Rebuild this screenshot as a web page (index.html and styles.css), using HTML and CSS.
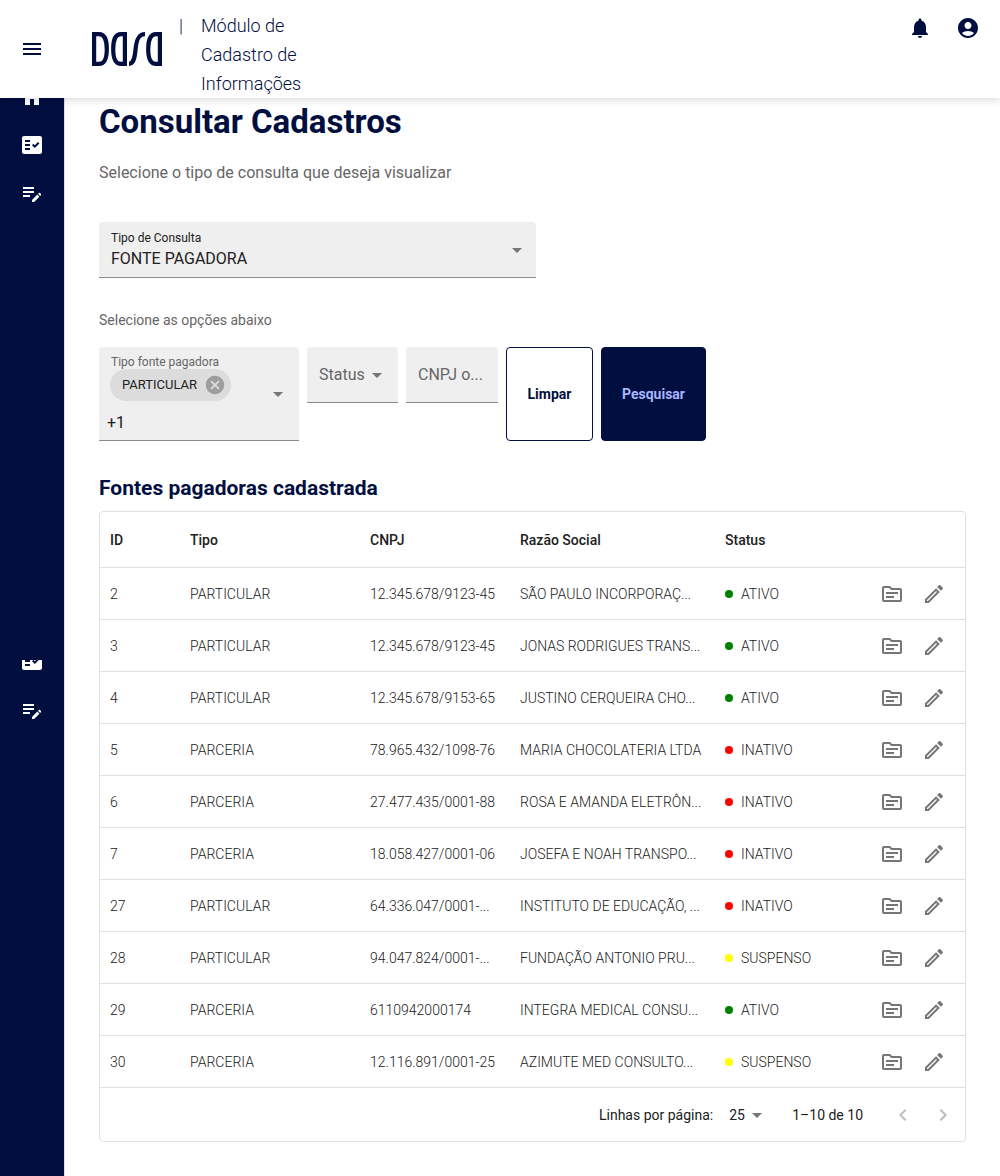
FILE: index.html
```html
<!DOCTYPE html>
<html lang="pt-BR">
<head>
<meta charset="utf-8">
<meta name="viewport" content="width=device-width, initial-scale=1">
<title>Consultar Cadastros</title>
<link rel="stylesheet" href="styles.css">
</head>
<body>
<svg class="sprite" aria-hidden="true">
  <symbol id="menu" viewBox="0 0 24 24"><path d="M3 18h18v-2H3v2zm0-5h18v-2H3v2zm0-7v2h18V6H3z"/></symbol>
  <symbol id="bell" viewBox="0 0 24 24"><path d="M12 22c1.1 0 2-.9 2-2h-4c0 1.100.89 2 2 2zm6-6v-5c0-3.070-1.640-5.640-4.500-6.320V4c0-.83-.67-1.500-1.500-1.500s-1.500.67-1.500 1.500v.68C7.630 5.360 6 7.920 6 11v5l-2 2v1h16v-1l-2-2z"/></symbol>
  <symbol id="account" viewBox="0 0 24 24"><path d="M12 2C6.480 2 2 6.480 2 12s4.480 10 10 10 10-4.480 10-10S17.520 2 12 2zm0 4c1.930 0 3.500 1.570 3.500 3.500S13.930 13 12 13s-3.500-1.570-3.500-3.500S10.070 6 12 6zm0 14c-2.030 0-4.430-.82-6.140-2.880C7.550 15.800 9.680 15 12 15s4.450.8 6.140 2.120C16.430 19.180 14.030 20 12 20z"/></symbol>
  <symbol id="home" viewBox="0 0 24 24"><path d="M10 20v-6h4v6h5v-8h3L12 3 2 12h3v8z"/></symbol>
  <symbol id="check" viewBox="0 0 24 24"><path fill-rule="evenodd" d="M20 3H4c-1.100 0-2 .9-2 2v14c0 1.100.9 2 2 2h16c1.100 0 2-.9 2-2V5c0-1.100-.9-2-2-2zM10 17H5v-2h5v2zm0-4H5v-2h5v2zm0-4H5V7h5v2zm4.820 6L12 12.160l1.410-1.410 1.410 1.420L17.990 9l1.420 1.420L14.820 15z"/></symbol>
  <symbol id="note" viewBox="0 0 24 24"><path d="M3 10h11v2H3v-2zm0-2h11V6H3v2zm0 8h7v-2H3v2zm15.010-3.130.71-.71c.39-.39 1.020-.39 1.410 0l.71.71c.39.39.39 1.020 0 1.410l-.71.71-2.120-2.120zm-.71.71-5.300 5.300V21h2.120l5.300-5.300-2.120-2.120z"/></symbol>
  <symbol id="source" viewBox="0 0 24 24"><path d="M20 6h-8l-2-2H4c-1.100 0-1.990.9-1.990 2L2 18c0 1.100.9 2 2 2h16c1.100 0 2-.9 2-2V8c0-1.100-.9-2-2-2zm0 12H4V6h5.170l2 2H20v10zm-2-6H6v-2h12v2zm-4 4H6v-2h8v2z"/></symbol>
  <symbol id="edit" viewBox="0 0 24 24"><path d="m14.060 9.020.92.92L5.920 19H5v-.92l9.060-9.060M17.660 3c-.25 0-.51.1-.7.29l-1.830 1.830 3.750 3.750 1.830-1.830c.39-.39.39-1.020 0-1.410l-2.340-2.340c-.2-.2-.45-.29-.71-.29zm-3.600 3.190L3 17.250V21h3.750L17.810 9.940l-3.750-3.750z"/></symbol>
  <symbol id="arrow" viewBox="0 0 24 24"><path d="m7 10 5 5 5-5z"/></symbol>
  <symbol id="cancel" viewBox="0 0 24 24"><path d="M12 2C6.470 2 2 6.470 2 12s4.470 10 10 10 10-4.470 10-10S17.530 2 12 2zm5 13.590L15.590 17 12 13.410 8.410 17 7 15.590 10.590 12 7 8.410 8.410 7 12 10.590 15.590 7 17 8.410 13.410 12 17 15.590z"/></symbol>
  <symbol id="prev" viewBox="0 0 24 24"><path d="M15.410 16.590 10.830 12l4.580-4.590L14 6l-6 6 6 6z"/></symbol>
  <symbol id="next" viewBox="0 0 24 24"><path d="M8.590 16.590 13.170 12 8.590 7.410 10 6l6 6-6 6z"/></symbol>
</svg>

<header class="topbar">
  <button class="icon-button menu-button" type="button" aria-label="Menu"><svg class="icon"><use href="#menu"/></svg></button>
  <svg class="logo" viewBox="0 0 70 36" role="img" aria-label="Dasa">
    <g fill="none" stroke="currentColor" stroke-width="4.200">
      <path d="M2.100 3.100H7c5.500 0 7.800 4.900 7.800 14.900S12.500 32.900 7 32.900H2.100z"/>
      <path d="M32.900 3.100H29c-5.500 0-7.800 4.900-7.800 14.900s2.300 14.900 7.800 14.900h3.900z"/>
      <path d="M37 32.900c4 0 5.600-4 6.600-14.900S47.500 3.100 53 3.100"/>
      <path d="M67.900 3.100H64c-5.500 0-7.800 4.900-7.800 14.900s2.300 14.900 7.800 14.900h3.900z"/>
    </g>
  </svg>
  <span class="divider">|</span>
  <p class="module">Módulo de Cadastro de Informações</p>
  <div class="topbar-actions">
    <button class="icon-button" type="button" aria-label="Notificações"><svg class="icon"><use href="#bell"/></svg></button>
    <button class="icon-button" type="button" aria-label="Conta"><svg class="icon"><use href="#account"/></svg></button>
  </div>
</header>

<div class="shell">
  <nav class="sidebar" aria-label="Principal">
    <div class="nav-group">
      <a class="nav-link nav-cut" href="#" aria-label="Início"><svg class="icon"><use href="#home"/></svg></a>
      <a class="nav-link" href="#" aria-label="Consultas"><svg class="icon"><use href="#check"/></svg></a>
      <a class="nav-link" href="#" aria-label="Cadastros"><svg class="icon"><use href="#note"/></svg></a>
    </div>
    <div class="nav-group">
      <a class="nav-link nav-cut" href="#" aria-label="Consultas"><svg class="icon"><use href="#check"/></svg></a>
      <a class="nav-link" href="#" aria-label="Cadastros"><svg class="icon"><use href="#note"/></svg></a>
    </div>
  </nav>

  <main class="content">
    <h1>Consultar Cadastros</h1>
    <p class="lead">Selecione o tipo de consulta que deseja visualizar</p>

    <div class="field query-field">
      <label for="tipo-consulta">Tipo de Consulta</label>
      <select id="tipo-consulta"><option>FONTE PAGADORA</option></select>
      <svg class="icon caret"><use href="#arrow"/></svg>
    </div>

    <p class="hint">Selecione as opções abaixo</p>
    <form class="filters">
      <div class="field multi-field" role="group" aria-labelledby="tipo-fonte">
        <span class="multi-label" id="tipo-fonte">Tipo fonte pagadora</span>
        <div class="chip">PARTICULAR<button type="button" class="chip-remove" aria-label="Remover PARTICULAR"><svg class="icon"><use href="#cancel"/></svg></button></div>
        <span class="more">+1</span>
        <button type="button" class="caret multi-open" aria-label="Abrir opções"><svg class="icon"><use href="#arrow"/></svg></button>
      </div>
      <div class="field short-field status-field">
        <select aria-label="Status"><option>Status</option></select>
        <svg class="icon caret"><use href="#arrow"/></svg>
      </div>
      <div class="field short-field">
        <input type="text" aria-label="CNPJ" placeholder="CNPJ o...">
      </div>
      <button class="button" type="reset">Limpar</button>
      <button class="button button-primary" type="submit">Pesquisar</button>
    </form>

    <h2>Fontes pagadoras cadastrada</h2>
    <section class="panel">
      <table>
        <colgroup><col class="col-id"><col class="col-type"><col class="col-cnpj"><col class="col-name"><col class="col-status"><col class="col-actions"></colgroup>
        <thead><tr><th>ID</th><th>Tipo</th><th>CNPJ</th><th>Razão Social</th><th>Status</th><th></th></tr></thead>
        <tbody>
          <tr><td>2</td><td>PARTICULAR</td><td>12.345.678/9123-45</td><td>SÃO PAULO INCORPORAÇ...</td><td><span class="status active">ATIVO</span></td><td><div class="actions"><button type="button" class="icon-button" aria-label="Detalhes"><svg class="icon"><use href="#source"/></svg></button><button type="button" class="icon-button" aria-label="Editar"><svg class="icon"><use href="#edit"/></svg></button></div></td></tr>
          <tr><td>3</td><td>PARTICULAR</td><td>12.345.678/9123-45</td><td>JONAS RODRIGUES TRANS...</td><td><span class="status active">ATIVO</span></td><td><div class="actions"><button type="button" class="icon-button" aria-label="Detalhes"><svg class="icon"><use href="#source"/></svg></button><button type="button" class="icon-button" aria-label="Editar"><svg class="icon"><use href="#edit"/></svg></button></div></td></tr>
          <tr><td>4</td><td>PARTICULAR</td><td>12.345.678/9153-65</td><td>JUSTINO CERQUEIRA CHO...</td><td><span class="status active">ATIVO</span></td><td><div class="actions"><button type="button" class="icon-button" aria-label="Detalhes"><svg class="icon"><use href="#source"/></svg></button><button type="button" class="icon-button" aria-label="Editar"><svg class="icon"><use href="#edit"/></svg></button></div></td></tr>
          <tr><td>5</td><td>PARCERIA</td><td>78.965.432/1098-76</td><td>MARIA CHOCOLATERIA LTDA</td><td><span class="status inactive">INATIVO</span></td><td><div class="actions"><button type="button" class="icon-button" aria-label="Detalhes"><svg class="icon"><use href="#source"/></svg></button><button type="button" class="icon-button" aria-label="Editar"><svg class="icon"><use href="#edit"/></svg></button></div></td></tr>
          <tr><td>6</td><td>PARCERIA</td><td>27.477.435/0001-88</td><td>ROSA E AMANDA ELETRÔN...</td><td><span class="status inactive">INATIVO</span></td><td><div class="actions"><button type="button" class="icon-button" aria-label="Detalhes"><svg class="icon"><use href="#source"/></svg></button><button type="button" class="icon-button" aria-label="Editar"><svg class="icon"><use href="#edit"/></svg></button></div></td></tr>
          <tr><td>7</td><td>PARCERIA</td><td>18.058.427/0001-06</td><td>JOSEFA E NOAH TRANSPO...</td><td><span class="status inactive">INATIVO</span></td><td><div class="actions"><button type="button" class="icon-button" aria-label="Detalhes"><svg class="icon"><use href="#source"/></svg></button><button type="button" class="icon-button" aria-label="Editar"><svg class="icon"><use href="#edit"/></svg></button></div></td></tr>
          <tr><td>27</td><td>PARTICULAR</td><td>64.336.047/0001-...</td><td>INSTITUTO DE EDUCAÇÃO, ...</td><td><span class="status inactive">INATIVO</span></td><td><div class="actions"><button type="button" class="icon-button" aria-label="Detalhes"><svg class="icon"><use href="#source"/></svg></button><button type="button" class="icon-button" aria-label="Editar"><svg class="icon"><use href="#edit"/></svg></button></div></td></tr>
          <tr><td>28</td><td>PARTICULAR</td><td>94.047.824/0001-...</td><td>FUNDAÇÃO ANTONIO PRU...</td><td><span class="status suspended">SUSPENSO</span></td><td><div class="actions"><button type="button" class="icon-button" aria-label="Detalhes"><svg class="icon"><use href="#source"/></svg></button><button type="button" class="icon-button" aria-label="Editar"><svg class="icon"><use href="#edit"/></svg></button></div></td></tr>
          <tr><td>29</td><td>PARCERIA</td><td>6110942000174</td><td>INTEGRA MEDICAL CONSU...</td><td><span class="status active">ATIVO</span></td><td><div class="actions"><button type="button" class="icon-button" aria-label="Detalhes"><svg class="icon"><use href="#source"/></svg></button><button type="button" class="icon-button" aria-label="Editar"><svg class="icon"><use href="#edit"/></svg></button></div></td></tr>
          <tr><td>30</td><td>PARCERIA</td><td>12.116.891/0001-25</td><td>AZIMUTE MED CONSULTO...</td><td><span class="status suspended">SUSPENSO</span></td><td><div class="actions"><button type="button" class="icon-button" aria-label="Detalhes"><svg class="icon"><use href="#source"/></svg></button><button type="button" class="icon-button" aria-label="Editar"><svg class="icon"><use href="#edit"/></svg></button></div></td></tr>
        </tbody>
      </table>
      <footer class="pagination">
        <label for="linhas">Linhas por página:</label>
        <div class="page-size">
          <select id="linhas"><option>25</option></select>
          <svg class="icon caret"><use href="#arrow"/></svg>
        </div>
        <span class="page-range">1–10 de 10</span>
        <div class="pager">
          <button type="button" class="icon-button" aria-label="Página anterior" disabled><svg class="icon"><use href="#prev"/></svg></button>
          <button type="button" class="icon-button" aria-label="Próxima página" disabled><svg class="icon"><use href="#next"/></svg></button>
        </div>
      </footer>
    </section>
  </main>
</div>
</body>
</html>
```

FILE: styles.css
```css
:root {
  --navy: #000e40;
  --line: #e0e0e0;
  --muted: #666;
  --text: #212121;
  --field: #efefef;
}

* { box-sizing: border-box; }

body {
  margin: 0;
  min-height: 100vh;
  display: flex;
  flex-direction: column;
  background: #fff;
  color: var(--text);
  font-family: Roboto, "Liberation Sans", sans-serif;
  font-size: 14px;
  line-height: 20px;
}

h1, h2, p { margin: 0; }

button, input, select { font: inherit; color: inherit; }

.sprite { display: none; }

.icon {
  display: block;
  flex: none;
  width: 24px;
  height: 24px;
  fill: currentColor;
}

.icon-button {
  display: flex;
  padding: 0;
  border: 0;
  background: none;
}

/* Top bar */
.topbar {
  position: sticky;
  top: 0;
  z-index: 2;
  display: flex;
  align-items: flex-start;
  padding: 11px 20px 0;
  background: #fff;
  color: var(--navy);
  box-shadow: 0 2px 8px rgba(0, 0, 0, 0.15);
}

.menu-button { align-self: center; padding-bottom: 11px; }

.logo {
  align-self: center;
  width: 70px;
  height: 36px;
  margin: 0 17px 11px 48px;
}

.divider, .module {
  font-size: 18px;
  font-weight: 300;
  line-height: 29px;
}

.module { width: 116px; margin-left: 18px; }

.topbar-actions {
  display: flex;
  gap: 24px;
  margin-left: auto;
  padding-top: 5px;
}

/* Sidebar */
.shell { display: flex; flex: 1; }

.sidebar {
  flex: none;
  width: 65px;
  border-right: 1px solid var(--line);
  background: var(--navy);
  color: #fff;
}

.nav-group + .nav-group { margin-top: 443px; }

.nav-link {
  display: flex;
  align-items: center;
  justify-content: center;
  height: 48px;
  color: inherit;
}

.nav-cut {
  align-items: flex-end;
  height: 23px;
  padding-bottom: 12px;
  overflow: hidden;
}

.nav-group + .nav-group .nav-cut { height: 26px; padding-bottom: 13px; }

/* Content */
.content {
  flex: 1;
  min-width: 0;
  padding: 0 34px 34px;
}

h1 {
  color: var(--navy);
  font-size: 33px;
  font-weight: 700;
  line-height: 48px;
}

.lead {
  margin-top: 15px;
  color: var(--muted);
  font-size: 16px;
  line-height: 24px;
}

.hint { margin-top: 32px; color: var(--muted); }

.field {
  position: relative;
  border-bottom: 1px solid #8c8c8c;
  border-radius: 4px 4px 0 0;
  background: var(--field);
}

.field select, .field input, .page-size select {
  appearance: none;
  width: 100%;
  border: 0;
  border-radius: 0;
  outline: 0;
  background: transparent;
}

.caret {
  position: absolute;
  color: #757575;
  pointer-events: none;
}

.query-field {
  max-width: 437px;
  height: 56px;
  margin-top: 37px;
}

.query-field label {
  position: absolute;
  top: 6px;
  left: 12px;
  color: var(--text);
  font-size: 12px;
}

.query-field select {
  height: 55px;
  padding: 18px 36px 0 12px;
  font-size: 16px;
}

.query-field .caret { top: 16px; right: 7px; }

.filters {
  display: grid;
  grid-template-columns: 200px 91px 92px 87px 105px;
  gap: 8px;
  margin-top: 17px;
}

.multi-field {
  display: flex;
  flex-direction: column;
  align-items: flex-start;
  padding: 8px 8px 7px;
}

.multi-label {
  padding-left: 4px;
  color: var(--muted);
  font-size: 12px;
  line-height: 14px;
}

.chip {
  display: flex;
  align-items: center;
  gap: 7px;
  height: 32px;
  margin-left: 3px;
  padding: 0 5px 0 12px;
  border-radius: 16px;
  background: #dcdcdc;
  font-size: 13px;
}

.chip-remove {
  padding: 0;
  border: 0;
  background: none;
  color: #9d9d9d;
}

.chip-remove .icon { width: 22px; height: 22px; }

.more {
  margin-top: 12px;
  font-size: 16px;
}

.multi-open {
  top: 35px;
  right: 9px;
  padding: 0;
  border: 0;
  background: none;
}

.short-field {
  height: 56px;
  color: var(--muted);
}

.short-field select, .short-field input {
  height: 55px;
  padding: 0 12px;
  font-size: 16px;
}

.short-field input::placeholder { color: var(--muted); opacity: 1; }

.status-field .caret { top: 16px; right: 9px; }

.button {
  padding: 0;
  border: 1px solid var(--navy);
  border-radius: 4px;
  background: #fff;
  color: var(--navy);
  font-weight: 700;
}

.button-primary { background: var(--navy); color: #a8b5ff; }

h2 {
  margin-top: 31px;
  color: var(--navy);
  font-size: 21px;
  font-weight: 700;
  line-height: 32px;
}

/* Data table */
.panel {
  margin-top: 7px;
  border: 1px solid var(--line);
  border-radius: 4px;
}

table {
  width: 100%;
  border-collapse: separate;
  border-spacing: 0;
  table-layout: fixed;
}

.col-id { width: 80px; }
.col-type { width: 180px; }
.col-cnpj { width: 150px; }
.col-name { width: 205px; }
.col-status { width: 140px; }

th, td {
  height: 52px;
  padding: 0 0 0 10px;
  border-bottom: 1px solid var(--line);
  overflow: hidden;
  text-align: left;
  white-space: nowrap;
}

th { height: 56px; font-weight: 500; }

td { font-weight: 300; }

.status {
  display: flex;
  align-items: center;
  gap: 8px;
}

.status::before {
  width: 8px;
  height: 8px;
  border-radius: 50%;
  background: currentColor;
  content: "";
}

.active::before { background: #008000; }
.inactive::before { background: #f00; }
.suspended::before { background: #ff0; }

.actions {
  display: flex;
  justify-content: flex-end;
  gap: 18px;
  padding-right: 19px;
  color: #757575;
}

.pagination {
  display: flex;
  align-items: center;
  justify-content: flex-end;
  height: 53px;
  padding-right: 10px;
}

.page-size {
  position: relative;
  width: 40px;
  margin: 0 23px 0 16px;
}

.page-size select { display: block; height: 24px; padding: 0; }

.page-size .caret { top: 0; right: 0; }

.pager {
  display: flex;
  gap: 16px;
  margin-left: 28px;
  color: #bdbdbd;
}
```
